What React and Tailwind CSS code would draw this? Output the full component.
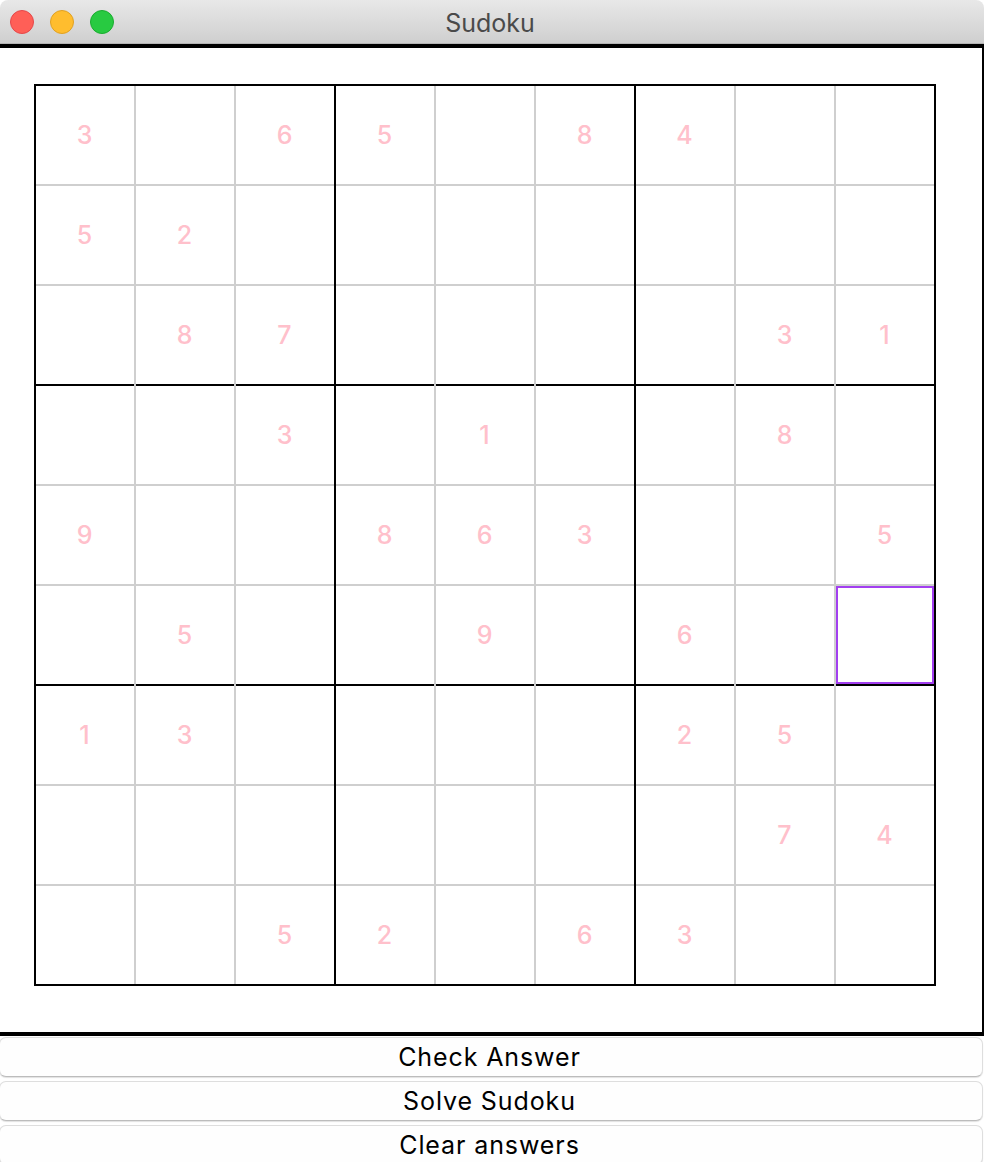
const rows = [
  [3, 0, 6, 5, 0, 8, 4, 0, 0],
  [5, 2, 0, 0, 0, 0, 0, 0, 0],
  [0, 8, 7, 0, 0, 0, 0, 3, 1],
  [0, 0, 3, 0, 1, 0, 0, 8, 0],
  [9, 0, 0, 8, 6, 3, 0, 0, 5],
  [0, 5, 0, 0, 9, 0, 6, 0, 0],
  [1, 3, 0, 0, 0, 0, 2, 5, 0],
  [0, 0, 0, 0, 0, 0, 0, 7, 4],
  [0, 0, 5, 2, 0, 6, 3, 0, 0],
];

function Cell({ value, r, c }) {
  const lastCol = c === 8;
  const lastRow = r === 8;
  const right = lastCol ? "" : (c + 1) % 3 === 0 ? "border-r-2 border-r-black" : "border-r-2 border-r-[#cfcfcf]";
  const bottom = lastRow ? "" : (r + 1) % 3 === 0 ? "border-b-2 border-b-black" : "border-b-2 border-b-[#cfcfcf]";
  const selected = r === 5 && c === 8;
  return (
    <div className={`${right}`}>
      <div className={`h-full ${bottom}`}>
        <div
          className={`flex h-full w-full items-center justify-center pr-[1px] text-[25px] leading-none font-medium text-[#ffc0cb] ${
            selected ? "border-2 border-[#a23ff0]" : ""
          }`}
        >
          {value || ""}
        </div>
      </div>
    </div>
  );
}

function Btn({ children }) {
  return (
    <button className="flex h-[40px] w-[984px] shrink-0 items-center justify-center rounded-[7px] border border-[#dedede] border-b-[#bcbcbc] bg-[#fefefe] pr-[3px] text-[25px] leading-none tracking-[0.9px] text-black shadow-[0_1px_1px_#e2e2e2]">
      {children}
    </button>
  );
}

export default function App() {
  return (
    <div className="h-[1162px] w-[984px] overflow-hidden bg-white font-['Inter',sans-serif]">
      <div className="relative flex h-[44px] items-center justify-center rounded-t-[8px] border-b border-[#b4b4b4] bg-gradient-to-b from-[#e8e8e8] to-[#cfcfcf] pt-[4px] pr-[4px]">
        <div className="absolute top-[10px] left-[10px] flex gap-[16px]">
          <span className="h-[24px] w-[24px] rounded-full border border-[#e5484a] bg-[#ff5f57]" />
          <span className="h-[24px] w-[24px] rounded-full border border-[#e0a123] bg-[#ffbd2e]" />
          <span className="h-[24px] w-[24px] rounded-full border border-[#1aac2f] bg-[#28ca41]" />
        </div>
        <span className="text-[25px] leading-none text-[#4a4a4a]">Sudoku</span>
      </div>
      <div className="h-[992px] w-[984px] border-t-4 border-r-2 border-b-4 border-black pt-[36px] pl-[34px]">
        <div className="grid w-[902px] grid-cols-[repeat(8,100px)_98px] grid-rows-[repeat(8,100px)_98px] border-2 border-black">
          {rows.map((row, r) =>
            row.map((v, c) => <Cell key={`${r}-${c}`} value={v} r={r} c={c} />)
          )}
        </div>
      </div>
      <div className="mt-[1px] flex flex-col gap-[4px] pr-[1px] -ml-[1px]">
        <Btn>Check Answer</Btn>
        <Btn>Solve Sudoku</Btn>
        <Btn>Clear answers</Btn>
      </div>
    </div>
  );
}
